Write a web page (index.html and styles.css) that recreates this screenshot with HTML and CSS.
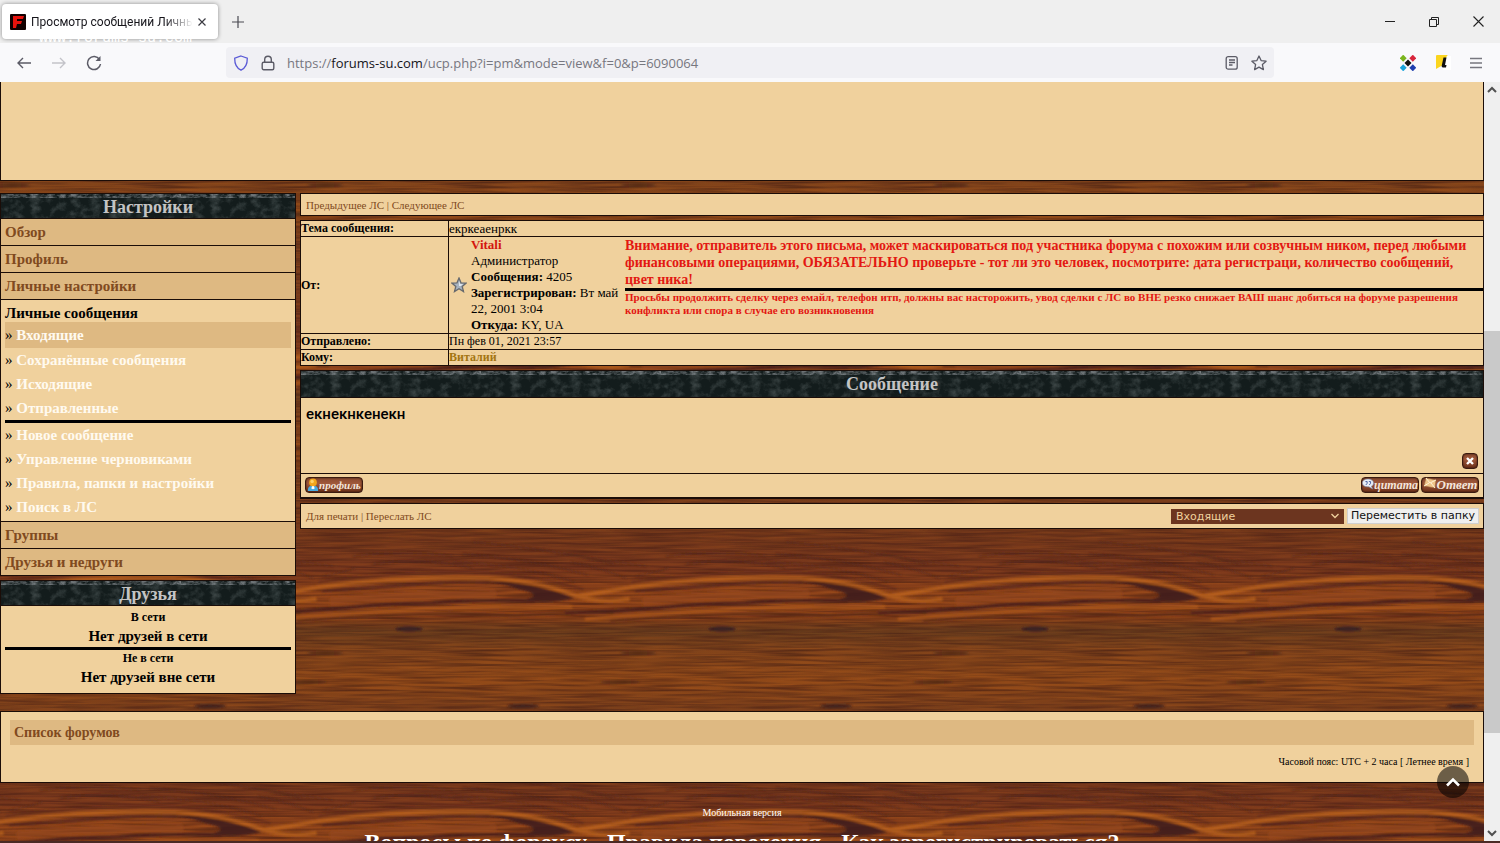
FILE: index.html
```html
<!DOCTYPE html>
<html lang="ru">
<head>
<meta charset="utf-8">
<title>Просмотр сообщений Личные сообщения</title>
<link rel="stylesheet" href="styles.css">
</head>
<body>
<header class="browser">
  <div class="tabbar">
    <div class="tab">
      <svg class="favicon" viewBox="0 0 16 16"><rect width="16" height="16" rx="1" fill="#100"/><path d="M3 2h11l-1 3H7v2h5l-1 3H7l-1 4H3z" fill="#e8120c"/></svg>
      <span class="tab-title">Просмотр сообщений Личные</span>
      <button class="plain tab-close" aria-label="Закрыть вкладку"><svg width="8" height="8" viewBox="0 0 8 8"><path d="M.5.5l7 7m0-7l-7 7" stroke="#3b3b42" stroke-width="1.2"/></svg></button>
    </div>
    <button class="plain new-tab" aria-label="Новая вкладка"><svg width="12" height="12" viewBox="0 0 12 12"><path d="M6 0v12M0 6h12" stroke="#4a4a52" stroke-width="1.2"/></svg></button>
    <div class="window-buttons">
      <button class="plain" aria-label="Свернуть"><svg width="10" height="10" viewBox="0 0 10 10"><path d="M0 4.500h10" stroke="#222"/></svg></button>
      <button class="plain" aria-label="Свернуть в окно"><svg width="10" height="10" viewBox="0 0 10 10" fill="none" stroke="#222"><path d="M.5 2.500h7v7h-7zM2.500 2.500v-2h7v7h-2"/></svg></button>
      <button class="plain" aria-label="Закрыть"><svg width="11" height="11" viewBox="0 0 11 11"><path d="M.5.5l10 10m0-10l-10 10" stroke="#222" stroke-width="1.1"/></svg></button>
    </div>
    <span class="watermark">www.forums-su.com</span>
  </div>
  <div class="toolbar">
    <button class="plain nav-button" aria-label="Назад"><svg width="16" height="16" viewBox="0 0 16 16" fill="none" stroke="#5b5b66" stroke-width="1.4"><path d="M15 8H2M7 3L2 8l5 5"/></svg></button>
    <button class="plain nav-button" aria-label="Вперёд"><svg width="16" height="16" viewBox="0 0 16 16" fill="none" stroke="#c3c3c9" stroke-width="1.4"><path d="M1 8h13M9 3l5 5-5 5"/></svg></button>
    <button class="plain nav-button" aria-label="Обновить"><svg width="16" height="16" viewBox="0 0 16 16" fill="none" stroke="#5b5b66" stroke-width="1.5"><path d="M13.500 4.500A6.500 6.500 0 1 0 14.500 9"/><path d="M14.500 1v5h-5z" fill="#5b5b66" stroke="none"/></svg></button>
    <div class="urlbar">
      <svg width="16" height="16" viewBox="0 0 16 16" fill="none" stroke="#5a5ad6" stroke-width="1.3"><path d="M8 1l6.300 2.200C14.400 9 12.500 13 8 15.200 3.500 13 1.600 9 1.700 3.200z"/></svg>
      <svg width="14" height="16" viewBox="0 0 14 16" fill="none" stroke="#5b5b66" stroke-width="1.4"><rect x="1.200" y="7.200" width="11.600" height="7.600" rx="1.500"/><path d="M3.700 7V4.500a3.300 3.300 0 0 1 6.600 0V7"/></svg>
      <span class="url">https://<b>forums-su.com</b>/ucp.php?i=pm&amp;mode=view&amp;f=0&amp;p=6090064</span>
      <svg width="14" height="14" viewBox="0 0 14 14" fill="none" stroke="#5b5b66" stroke-width="1.300"><rect x="1.200" y=".7" width="11" height="12.500" rx="2"/><path d="M4 4h6M4 6.500h6M4 9h3.500"/></svg>
      <svg width="16" height="16" viewBox="0 0 16 16" fill="none" stroke="#5b5b66" stroke-width="1.300" stroke-linejoin="round"><path d="M8 1l2.100 4.600 5 .6-3.700 3.400 1 5L8 12.100l-4.400 2.500 1-5L.9 6.200l5-.6z"/></svg>
    </div>
    <div class="extensions">
      <svg width="16" height="16" viewBox="0 0 16 16"><path d="M3.200-.3l3.500 3.500-3.500 3.500L-.3 3.200z" fill="#7ab51d"/><path d="M12.800-.3l3.500 3.500-3.500 3.500-3.500-3.500z" fill="#d8263c"/><path d="M3.200 9.300l3.500 3.500-3.500 3.500-3.500-3.500z" fill="#1ba4dc"/><path d="M12.800 9.300l3.500 3.500-3.500 3.500-3.500-3.500z" fill="#1f3fae"/><path d="M8 4.500L11.500 8 8 11.500 4.500 8z" fill="#111"/></svg>
      <svg width="16" height="16" viewBox="0 0 16 16"><path d="M4 1h12v14H8z" fill="#fff"/><path d="M1 1q0-1 1-1h11q-1 0-2 3L8 10l-7 4z" fill="#fbd51e"/><path d="M8.500 2.500h3l-1.500 7.500h1.500l-.5 2.500H8c-1.300 0-1.500-1-1.200-2.200z" fill="#111"/></svg>
      <button class="plain" aria-label="Меню"><svg width="12" height="12" viewBox="0 0 12 12"><path d="M0 1.500h12M0 6h12M0 10.500h12" stroke="#77777f" stroke-width="1.300"/></svg></button>
    </div>
  </div>
</header>

<div class="viewport">
  <div class="page">
    <div class="panel banner"></div>

    <div class="columns">
      <aside class="sidebar">
        <nav class="panel">
          <h2 class="cap">Настройки</h2>
          <a class="section" href="#">Обзор</a>
          <a class="section" href="#">Профиль</a>
          <a class="section" href="#">Личные настройки</a>
          <div class="open-section">
            <strong>Личные сообщения</strong>
            <ul class="folders">
              <li class="current"><a href="#">Входящие</a></li>
              <li><a href="#">Сохранённые сообщения</a></li>
              <li><a href="#">Исходящие</a></li>
              <li><a href="#">Отправленные</a></li>
            </ul>
            <hr class="rule">
            <ul class="folders">
              <li><a href="#">Новое сообщение</a></li>
              <li><a href="#">Управление черновиками</a></li>
              <li><a href="#">Правила, папки и настройки</a></li>
              <li><a href="#">Поиск в ЛС</a></li>
            </ul>
          </div>
          <a class="section" href="#">Группы</a>
          <a class="section" href="#">Друзья и недруги</a>
        </nav>
        <section class="panel">
          <h2 class="cap">Друзья</h2>
          <div class="friends">
            <b class="small">В сети</b>
            <p>Нет друзей в сети</p>
            <hr class="rule">
            <b class="small">Не в сети</b>
            <p>Нет друзей вне сети</p>
          </div>
        </section>
      </aside>

      <main class="content">
        <div class="panel linkbar"><span><a href="#">Предыдущее ЛС</a> | <a href="#">Следующее ЛС</a></span></div>

        <table class="details">
          <tr><th scope="row">Тема сообщения:</th><td class="subject">екркеаенркк</td></tr>
          <tr>
            <th scope="row">От:</th>
            <td>
              <div class="sender">
                <svg class="star" width="16" height="16" viewBox="0 0 16 16"><path d="M8 1l2 4.800 5.200.3-4 3.300 1.300 5.100L8 11.700l-4.500 2.800 1.300-5.100-4-3.300L6 5.800z" fill="#a9b4c0" stroke="#67696d" stroke-width="1.300"/><path d="M8 4l1.200 3 3 .2-2.400 1.900L8 9z" fill="#e1e7ee"/></svg>
                <div class="author">
                  <div><a class="admin" href="#">Vitali</a></div>
                  <div>Администратор</div>
                  <div><b>Сообщения:</b> 4205</div>
                  <div><b>Зарегистрирован:</b> Вт май 22, 2001 3:04</div>
                  <div><b>Откуда:</b> KY, UA</div>
                </div>
                <div class="warning">
                  <p>Внимание, отправитель этого письма, может маскироваться под участника форума с похожим или созвучным ником, перед любыми финансовыми операциями, ОБЯЗАТЕЛЬНО проверьте - тот ли это человек, посмотрите: дата регистраци, количество сообщений, цвет ника!</p>
                  <hr class="rule">
                  <p class="fine">Просьбы продолжить сделку через емайл, телефон итп, должны вас насторожить, увод сделки с ЛС во ВНЕ резко снижает ВАШ шанс добиться на форуме разрешения конфликта или спора в случае его возникновения</p>
                </div>
              </div>
            </td>
          </tr>
          <tr><th scope="row">Отправлено:</th><td>Пн фев 01, 2021 23:57</td></tr>
          <tr><th scope="row">Кому:</th><td><a class="recipient" href="#">Виталий</a></td></tr>
        </table>

        <article class="panel message">
          <h2 class="cap">Сообщение</h2>
          <div class="message-body">
            <p>екнекнкенекн</p>
            <button class="wood-button delete" aria-label="Удалить"><svg width="8" height="8" viewBox="0 0 8 8"><path d="M1 1l6 6m0-6L1 7" stroke="#fff" stroke-width="2.400"/></svg></button>
          </div>
          <div class="message-actions">
            <a class="wood-button profile" href="#"><svg width="12" height="16" viewBox="0 0 14 16"><path d="M1 15c0-5 2-6 6-6s6 1 6 6z" fill="#48a9de"/><path d="M6 9h2l1 3-2 1-2-1z" fill="#fff"/><circle cx="7" cy="5" r="4.500" fill="#f2a51d"/><circle cx="6" cy="4" r="2" fill="#ffd267"/></svg>профиль</a>
            <a class="wood-button" href="#"><svg width="12" height="16" viewBox="0 0 14 16"><path d="M7 1c4 0 6.500 2 6.500 4.600 0 1.700-1 3-2.500 3.800l1.500 3.200-4.500-2.500C3 10.400.5 8.300.5 5.600.5 3 3 1 7 1z" fill="#e8edf4" stroke="#7987a2" stroke-width=".7"/><path d="M4 4h2v2L4.500 8M8 4h2v2L8.500 8" stroke="#344e98" fill="none"/></svg>цитата</a>
            <a class="wood-button reply" href="#"><svg width="14" height="16" viewBox="0 0 14 16"><path d="M3 1l10 2-1 8-11-2z" fill="#efc58a" stroke="#9b673c" stroke-width=".6"/><path d="M3 1l4 5 6-3M1 9l5-3m6 5L8 6" fill="none" stroke="#fff2d4"/></svg>Ответ</a>
          </div>
        </article>

        <form class="panel linkbar move-bar">
          <span><a href="#">Для печати</a> | <a href="#">Переслать ЛС</a></span>
          <div class="move">
            <div class="select-wrap">
              <select aria-label="Папка"><option>Входящие</option></select>
              <svg width="8" height="6" viewBox="0 0 8 6"><path d="M.5 1L4 4.500 7.500 1" fill="none" stroke="#f0d19d" stroke-width="1.300"/></svg>
            </div>
            <button type="button" class="move-button">Переместить в папку</button>
          </div>
        </form>
      </main>
    </div>

    <footer>
      <div class="panel board-nav">
        <a class="board-index" href="#">Список форумов</a>
        <p>Часовой пояс: UTC + 2 часа [ Летнее время ]</p>
      </div>
      <a class="mobile" href="#">Мобильная версия</a>
      <nav class="help"><a href="#">Вопросы по форексу</a> - <a href="#">Правила поведения</a> - <a href="#">Как зарегистрироваться?</a></nav>
    </footer>
    <button class="plain to-top" aria-label="Наверх"><svg width="16" height="10" viewBox="0 0 16 10"><path d="M2 8.500l6-6 6 6" fill="none" stroke="#fff" stroke-width="2.600"/></svg></button>
  </div>
  <div class="scrollbar">
    <svg width="10" height="8" viewBox="0 0 10 8"><path d="M1 6l4-4 4 4" fill="none" stroke="#505050" stroke-width="2"/></svg>
    <div class="track"><div class="thumb"></div></div>
    <svg width="10" height="8" viewBox="0 0 10 8"><path d="M1 2l4 4 4-4" fill="none" stroke="#505050" stroke-width="2"/></svg>
  </div>
</div>
</body>
</html>
```

FILE: styles.css
```css
* { box-sizing: border-box; }

body {
  margin: 0;
  height: 100vh;
  display: flex;
  flex-direction: column;
  overflow: hidden;
  font-family: "Palatino Linotype", "Book Antiqua", "Liberation Serif", serif;
  color: #000;
}

p, h2, ul { margin: 0; padding: 0; }
a { text-decoration: none; }
svg { display: block; flex: none; }

.plain {
  display: flex;
  align-items: center;
  justify-content: center;
  padding: 0;
  border: 0;
  background: none;
}

/* Browser window */
.browser { flex: none; font-family: "Open Sans", "Noto Sans", sans-serif; }

.tabbar {
  position: relative;
  display: flex;
  height: 43px;
  overflow: hidden;
  background: #efefef;
}

.tab {
  display: flex;
  align-items: center;
  width: 216px;
  height: 35px;
  margin: 4px 0 0 2px;
  padding: 0 12px 0 8px;
  gap: 5px;
  border-radius: 4px;
  background: #fff;
  box-shadow: 0 0 4px #0000006b;
}

.favicon { width: 16px; height: 16px; }

.tab-title {
  flex: 1;
  overflow: hidden;
  white-space: nowrap;
  font-family: Roboto, sans-serif;
  font-size: 12px;
  color: #15141a;
  -webkit-mask-image: linear-gradient(to right, #000 82%, transparent);
  mask-image: linear-gradient(to right, #000 82%, transparent);
}

.new-tab { width: 40px; }

.window-buttons { display: flex; margin-left: auto; }
.window-buttons button { width: 44px; }

.watermark {
  position: absolute;
  left: 39px;
  top: 31px;
  font: 15px/16px "Liberation Mono", monospace;
  color: #fff;
}

.toolbar {
  display: flex;
  align-items: center;
  height: 39px;
  padding-left: 6px;
  background: #f9f9fb;
}

.nav-button { width: 35px; height: 32px; }

.urlbar {
  flex: 1;
  display: flex;
  align-items: center;
  gap: 12px;
  height: 31px;
  margin-left: 115px;
  padding: 0 7px;
  border-radius: 4px;
  background: #f0f0f4;
}

.url { flex: 1; font-size: 13px; color: #77777f; }
.url b { font-weight: 400; color: #15141a; }

.extensions {
  display: flex;
  align-items: center;
  gap: 19px;
  width: 226px;
  padding-right: 18px;
  justify-content: flex-end;
}

/* Page area */
.viewport { flex: 1; display: flex; min-height: 0; border-bottom: 2px solid #4a2a24; }

.page {
  position: relative;
  flex: 1;
  min-width: 0;
  overflow: hidden;
  background-color: #7a3c1a;
  background-position: 0 -20px;
  background-image: url("data:image/svg+xml,%3Csvg xmlns='http://www.w3.org/2000/svg' width='313' height='234'%3E%3Cdefs%3E%3ClinearGradient id='g' x2='0' y2='1'%3E%3Cstop stop-color='%23733719'/%3E%3Cstop offset='.16' stop-color='%2374341b'/%3E%3Cstop offset='.27' stop-color='%238e4218'/%3E%3Cstop offset='.37' stop-color='%23883f17'/%3E%3Cstop offset='.43' stop-color='%23663a1b'/%3E%3Cstop offset='.52' stop-color='%237e4119'/%3E%3Cstop offset='.64' stop-color='%238f4817'/%3E%3Cstop offset='.78' stop-color='%23763c1a'/%3E%3Cstop offset='1' stop-color='%23733719'/%3E%3C/linearGradient%3E%3Cfilter id='n' x='0' y='0' width='100%25' height='100%25' color-interpolation-filters='sRGB'%3E%3CfeTurbulence type='fractalNoise' baseFrequency='.016 .4' numOctaves='2' seed='7' stitchTiles='stitch'/%3E%3CfeColorMatrix values='0 0 0 0 .2 0 0 0 0 .07 0 0 0 0 .06 2 0 0 0 -.75'/%3E%3C/filter%3E%3Cfilter id='m' x='0' y='0' width='100%25' height='100%25' color-interpolation-filters='sRGB'%3E%3CfeTurbulence type='fractalNoise' baseFrequency='.013 .3' numOctaves='2' seed='21' stitchTiles='stitch'/%3E%3CfeColorMatrix values='0 0 0 0 .75 0 0 0 0 .38 0 0 0 0 .1 0 2 0 0 -.8'/%3E%3C/filter%3E%3Cfilter id='b' x='-10%25' y='-50%25' width='120%25' height='200%25'%3E%3CfeGaussianBlur stdDeviation='1.1'/%3E%3C/filter%3E%3Cg id='k' fill='none' stroke-linecap='round'%3E%3Cpath d='M-50 66Q-20 62 6 57Q84 46 174 48Q220 50 258 64Q285 74 315 69' stroke='%23b8601c' stroke-width='4'/%3E%3Cpath d='M10 61Q70 57 120 53Q160 50 176 52' stroke='%235a281a' stroke-width='2.500'/%3E%3Cpath d='M6 52Q84 41 174 43Q220 45 270 59' stroke='%235a281a' stroke-width='1.500'/%3E%3Cpath d='M20 71Q90 64 180 64' stroke='%2395461a' stroke-width='8'/%3E%3Cpath d='M165 50Q220 52 262 68Q235 75 208 70Q235 66 205 59Q190 53 165 50z' fill='%23401d1b' stroke='none'/%3E%3Cpath d='M-60 83Q0 81 41 77Q80 73 119 73Q180 69 221 71' stroke='%23451f1a' stroke-width='3'/%3E%3Cpath d='M-40 89Q40 83 75 81Q160 76 258 77' stroke='%23b05a1d' stroke-width='3'/%3E%3Cpath d='M-15 91Q40 86 81 85Q150 82 201 86Q260 82 300 83' stroke='%23562719' stroke-width='2'/%3E%3Cellipse cx='96' cy='99' rx='14' ry='2.500' fill='%23321a20'/%3E%3Cellipse cx='12' cy='123' rx='18' ry='1.500' fill='%23472018'/%3E%3Cellipse cx='-6' cy='152' rx='20' ry='1.500' fill='%23472018'/%3E%3Cellipse cx='210' cy='176' rx='16' ry='2' fill='%23381b1b'/%3E%3Cpath d='M-55 32Q-25 38 0 48M-60 24Q-20 31 20 36M160 12Q235 18 300 34M150 24Q215 28 275 45M140 32Q205 34 262 52M10 46Q30 43 42 38M40 26Q90 20 140 26M60 34Q110 26 160 38' stroke='%234d231b' stroke-width='1'/%3E%3C/g%3E%3C/defs%3E%3Crect width='313' height='234' fill='url(%23g)'/%3E%3Crect width='313' height='234' filter='url(%23m)' opacity='.3'/%3E%3Crect width='313' height='234' filter='url(%23n)' opacity='.45'/%3E%3Cg filter='url(%23b)' opacity='.9'%3E%3Cuse href='%23k'/%3E%3Cuse href='%23k' x='313'/%3E%3Cuse href='%23k' x='-313'/%3E%3C/g%3E%3Crect width='313' height='234' filter='url(%23n)' opacity='.15'/%3E%3C/svg%3E");
}

.panel { border: 1px solid #1b0d08; background: #f0d19d; }

.banner { height: 99px; margin-bottom: 12px; border-top: 0; }

.columns { display: grid; grid-template-columns: 1fr 4fr; align-items: start; gap: 4px; }
.sidebar { display: grid; gap: 4px; }
.content { min-width: 0; display: grid; gap: 4px; }

.cap {
  height: 25px;
  border-bottom: 1px solid #1b0d08;
  text-align: center;
  font-size: 18px;
  line-height: 26px;
  color: #c4c4c4;
  background: #182020 url("data:image/svg+xml,%3Csvg xmlns='http://www.w3.org/2000/svg' width='180' height='26'%3E%3Cfilter id='a' x='0' y='0' width='100%25' height='100%25' color-interpolation-filters='sRGB'%3E%3CfeTurbulence type='fractalNoise' baseFrequency='.1' numOctaves='5' seed='4' stitchTiles='stitch'/%3E%3CfeColorMatrix values='0 0 0 0 .38 0 0 0 0 .42 0 0 0 0 .42 2.400 0 0 0 -1.050'/%3E%3C/filter%3E%3Cfilter id='t' x='0' y='0' width='100%25' height='100%25' color-interpolation-filters='sRGB'%3E%3CfeTurbulence type='fractalNoise' baseFrequency='.17 .3' numOctaves='3' seed='9'/%3E%3CfeColorMatrix values='0 0 0 0 .6 0 0 0 0 .62 0 0 0 0 .64 2.500 0 0 0 -.8'/%3E%3C/filter%3E%3Crect width='180' height='26' fill='%23131c1c'/%3E%3Crect width='180' height='26' filter='url(%23a)' opacity='.5'/%3E%3Crect width='180' height='4' filter='url(%23t)' opacity='.65'/%3E%3C/svg%3E");
}

.message .cap { height: 27px; line-height: 26px; }

.section {
  display: block;
  height: 27px;
  padding-left: 4px;
  border-bottom: 1px solid #1b0d08;
  background: #deb982;
  font-size: 15px;
  font-weight: 700;
  line-height: 27px;
  color: #804a20;
}
.section:last-child { height: 26px; border-bottom: 0; }

.open-section {
  padding: 2px 4px;
  border-bottom: 1px solid #1b0d08;
  font-size: 15px;
  line-height: 20px;
}
.open-section strong { display: block; height: 20px; line-height: 22px; }

.folders { list-style: none; }
.folders li { height: 24px; line-height: 24px; }
.folders li::before { content: "» "; }
.folders a { font-weight: 700; color: #fffaf0; }
.folders .current { height: 26px; line-height: 26px; background: #deb982; }

.rule { height: 3px; margin: 0; border: 0; background: #000; }

.friends {
  padding: 3px 4px 5px;
  text-align: center;
  font-size: 15px;
  font-weight: 700;
}
.friends .small { display: block; font-size: 12px; line-height: 16px; }
.friends p { height: 22px; line-height: 22px; }

.linkbar {
  display: flex;
  align-items: center;
  justify-content: space-between;
  min-height: 23px;
  padding: 0 4px 0 5px;
  font-size: 11px;
  color: #804a20;
}
.linkbar a { color: #804a20; }
.move-bar { min-height: 26px; }

.details {
  width: 100%;
  border: 1px solid #1b0d08;
  border-collapse: collapse;
  background: #f0d19d;
  font-size: 12px;
  line-height: 15px;
}
.details th, .details td { padding: 0; border: 1px solid #1b0d08; text-align: left; }
.details th { width: 148px; }
.details .subject { font-size: 13px; }

.sender { display: flex; gap: 4px; padding-left: 2px; }
.star { align-self: center; }
.author { width: 150px; font-size: 13px; line-height: 16px; }
.admin { font-weight: 700; color: #d3170f; }
.recipient { font-weight: 700; color: #a47512; }

.warning { flex: 1; color: #e31812; font-weight: 700; }
.warning p { font-size: 14px; line-height: 17px; }
.warning .fine { font-size: 11px; line-height: 13px; }

.message-body {
  display: flex;
  flex-direction: column;
  justify-content: space-between;
  height: 76px;
  padding: 7px 5px 4px;
  border-bottom: 1px solid #1b0d08;
  font: 500 15px/18px Roboto, "Open Sans", sans-serif;
}

.message-actions {
  display: flex;
  gap: 2px;
  height: 24px;
  padding: 3px 4px;
  border-bottom: 1px solid #1b0d08;
}

.wood-button {
  display: flex;
  align-items: center;
  justify-content: center;
  width: 58px;
  height: 16px;
  padding: 0;
  border: 1px solid #3b1b10;
  border-radius: 4px;
  background: linear-gradient(#8b4b30, #a0583a 40%, #6b3019);
  box-shadow: inset 0 0 2px #2b1008;
  font: italic 700 12px/14px "Liberation Serif", serif;
  color: #f4e6dc;
}
.wood-button.profile { margin-right: auto; font-size: 11px; }
.wood-button.reply { font-size: 13px; }
.wood-button.delete { width: 16px; align-self: flex-end; }

.move { display: flex; gap: 3px; font-family: "DejaVu Sans", sans-serif; }

.select-wrap { display: grid; align-items: center; }
.select-wrap > * { grid-area: 1 / 1; }
.select-wrap svg { justify-self: end; margin-right: 5px; pointer-events: none; }

.move select {
  appearance: none;
  width: 173px;
  height: 15px;
  padding: 0 5px;
  border: 0;
  background: #6c351f;
  font: 11px/15px "DejaVu Sans", sans-serif;
  color: #f0d19d;
}

.move-button {
  width: 132px;
  height: 16px;
  padding: 0;
  border: 1px solid #d0d0d0;
  background: #efefef;
  font: 11px/14px "DejaVu Sans", sans-serif;
  color: #111;
  white-space: nowrap;
}

.board-nav { margin-top: 17px; padding: 8px 9px 11px; font-size: 10px; }

.board-index {
  display: block;
  padding-left: 4px;
  background: #deb982;
  font-size: 14px;
  font-weight: 700;
  line-height: 25px;
  color: #804a20;
}
.board-nav p { padding: 8px 5px 0; text-align: right; line-height: 18px; }

.mobile { display: block; margin-top: 22px; text-align: center; font-size: 10px; line-height: 16px; color: #fff; }

.help { margin-top: 6px; text-align: center; font-size: 24px; font-weight: 700; line-height: 30px; color: #fff; white-space: nowrap; }
.help a { color: #fff; }

.to-top {
  position: absolute;
  right: 15px;
  bottom: 43px;
  width: 32px;
  height: 32px;
  border-radius: 50%;
  background: #0000008c;
}

.scrollbar {
  display: flex;
  flex-direction: column;
  align-items: center;
  width: 16px;
  padding: 4px 0;
  background: #efefef;
}
.track { flex: 1; align-self: stretch; padding: 2px 0; }
.thumb { height: 55%; margin-top: 235px; background: #c9c9c9; }
```
